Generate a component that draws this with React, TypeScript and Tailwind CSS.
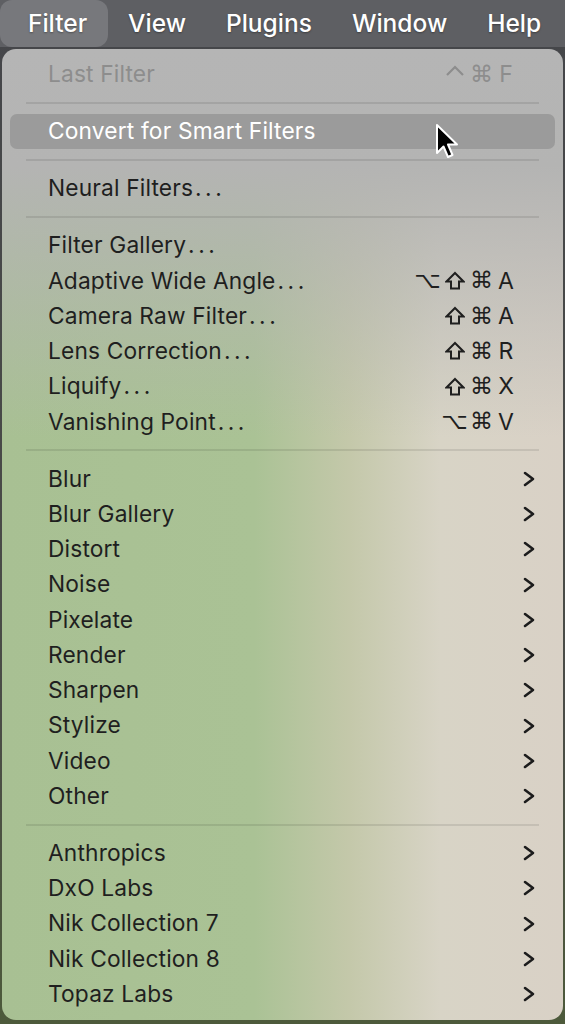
import React from "react";

type Item = { label: string; keys?: string[]; sub?: boolean; disabled?: boolean; active?: boolean };

const groups: Item[][] = [
  [{ label: "Last Filter", keys: ["⌃", "⌘", "F"], disabled: true }],
  [{ label: "Convert for Smart Filters", active: true }],
  [{ label: "Neural Filters..." }],
  [
    { label: "Filter Gallery..." },
    { label: "Adaptive Wide Angle...", keys: ["⌥", "⇧", "⌘", "A"] },
    { label: "Camera Raw Filter...", keys: ["⇧", "⌘", "A"] },
    { label: "Lens Correction...", keys: ["⇧", "⌘", "R"] },
    { label: "Liquify...", keys: ["⇧", "⌘", "X"] },
    { label: "Vanishing Point...", keys: ["⌥", "⌘", "V"] },
  ],
  ["Blur", "Blur Gallery", "Distort", "Noise", "Pixelate", "Render", "Sharpen", "Stylize", "Video", "Other"].map(
    (label) => ({ label, sub: true })
  ),
  ["Anthropics", "DxO Labs", "Nik Collection 7", "Nik Collection 8", "Topaz Labs"].map((label) => ({
    label,
    sub: true,
  })),
];

const menus = ["Filter", "View", "Plugins", "Window", "Help"];

function Chevron() {
  return (
    <svg width="14" height="16" viewBox="0 0 14 16" fill="none">
      <polyline points="3,2 11,8 3,14" stroke="#1c1c1c" strokeWidth="2.6" strokeLinecap="round" strokeLinejoin="round" />
    </svg>
  );
}

function ShiftKey() {
  return (
    <svg width="20" height="20" viewBox="0 0 20 20" fill="none" aria-label="⇧">
      <path d="M10 2 L18.5 10.5 L14 10.5 L14 17.5 L6 17.5 L6 10.5 L1.5 10.5 Z" stroke="currentColor" strokeWidth="2" strokeLinejoin="miter" />
    </svg>
  );
}

function CtrlKey() {
  return (
    <svg width="20" height="20" viewBox="0 0 20 20" fill="none" aria-label="⌃">
      <polyline points="2,10 10,2 18,10" stroke="currentColor" strokeWidth="2.2" />
    </svg>
  );
}

function Keys({ keys }: { keys: string[] }) {
  const mods = keys.slice(0, -1);
  const letter = keys[keys.length - 1];
  return (
    <div className="flex items-center gap-[6px] font-['DejaVu_Sans','Inter',sans-serif]">
      {mods.map((k) => (
        <span key={k} className="flex w-[21px] justify-center text-[23px] leading-none">
          {k === "⇧" ? <ShiftKey /> : k === "⌃" ? <CtrlKey /> : k}
        </span>
      ))}
      <span className="w-[16px] text-center font-['Inter',sans-serif] text-[23px]">{letter}</span>
    </div>
  );
}

function Label({ text }: { text: string }) {
  const dots = text.endsWith("...");
  const base = dots ? text.slice(0, -3) : text;
  return (
    <span className="text-[22.75px] leading-none tracking-[0.15px]">
      {base}
      {dots && <span className="ml-[2px] tracking-[3.5px]">...</span>}
    </span>
  );
}

function Row({ item }: { item: Item }) {
  return (
    <div
      className={`relative flex h-[35.25px] items-center justify-between rounded-[7px] pl-[38px] ${
        item.sub ? "pr-[19px]" : "pr-[41px]"
      } ${item.active ? "bg-[#9b9b9b] text-white" : item.disabled ? "text-[#8d8d8d]" : "text-[#1f1f1f]"}`}
    >
      <Label text={item.label} />
      {item.keys && <Keys keys={item.keys} />}
      {item.sub && <Chevron />}
    </div>
  );
}

export default function App() {
  return (
    <div className="relative h-[1024px] w-[565px] overflow-hidden bg-[linear-gradient(180deg,#45464a_0%,#4a4c46_70%,#4d5a3b_100%)] font-['Inter',sans-serif]">
      <div className="flex h-[47px] items-stretch bg-[#5e5f63] text-[24.5px] font-medium text-white [text-shadow:0_1px_2px_rgba(0,0,0,0.35)]">
        {menus.map((m, i) => (
          <div
            key={m}
            className={`flex items-center ${i === 0 ? "rounded-[12px] bg-[#77787c] pl-[28px] pr-[21px]" : "px-[20px]"}`}
          >
            {m}
          </div>
        ))}
      </div>

      <div className="mx-[2px] mt-[2px] rounded-[14px] bg-[linear-gradient(180deg,#b5b5b5_0%,#b4b4b3_12%,rgba(180,180,178,0)_40%),linear-gradient(90deg,#a8c093_0%,#aac295_45%,#c4c8aa_62%,#d8d4c6_78%,#d9d1c6_100%)] px-[8px] pb-[8px] pt-[8px]">
        {groups.map((g, gi) => (
          <div key={gi}>
            {gi > 0 && (
              <div className="flex h-[21.75px] items-center px-[16px]">
                <div className="h-[2px] w-full bg-black/[0.09]" />
              </div>
            )}
            {g.map((item) => (
              <Row key={item.label} item={item} />
            ))}
          </div>
        ))}
      </div>

      <svg className="absolute left-[434px] top-[123px]" width="28" height="40" viewBox="0 0 28 40">
        <path
          d="M3 2 L3 30 L9.5 23.5 L14 34 L18.5 32 L14 21.5 L23 21.5 Z"
          fill="#000"
          stroke="#fff"
          strokeWidth="2"
          strokeLinejoin="round"
        />
      </svg>
    </div>
  );
}
